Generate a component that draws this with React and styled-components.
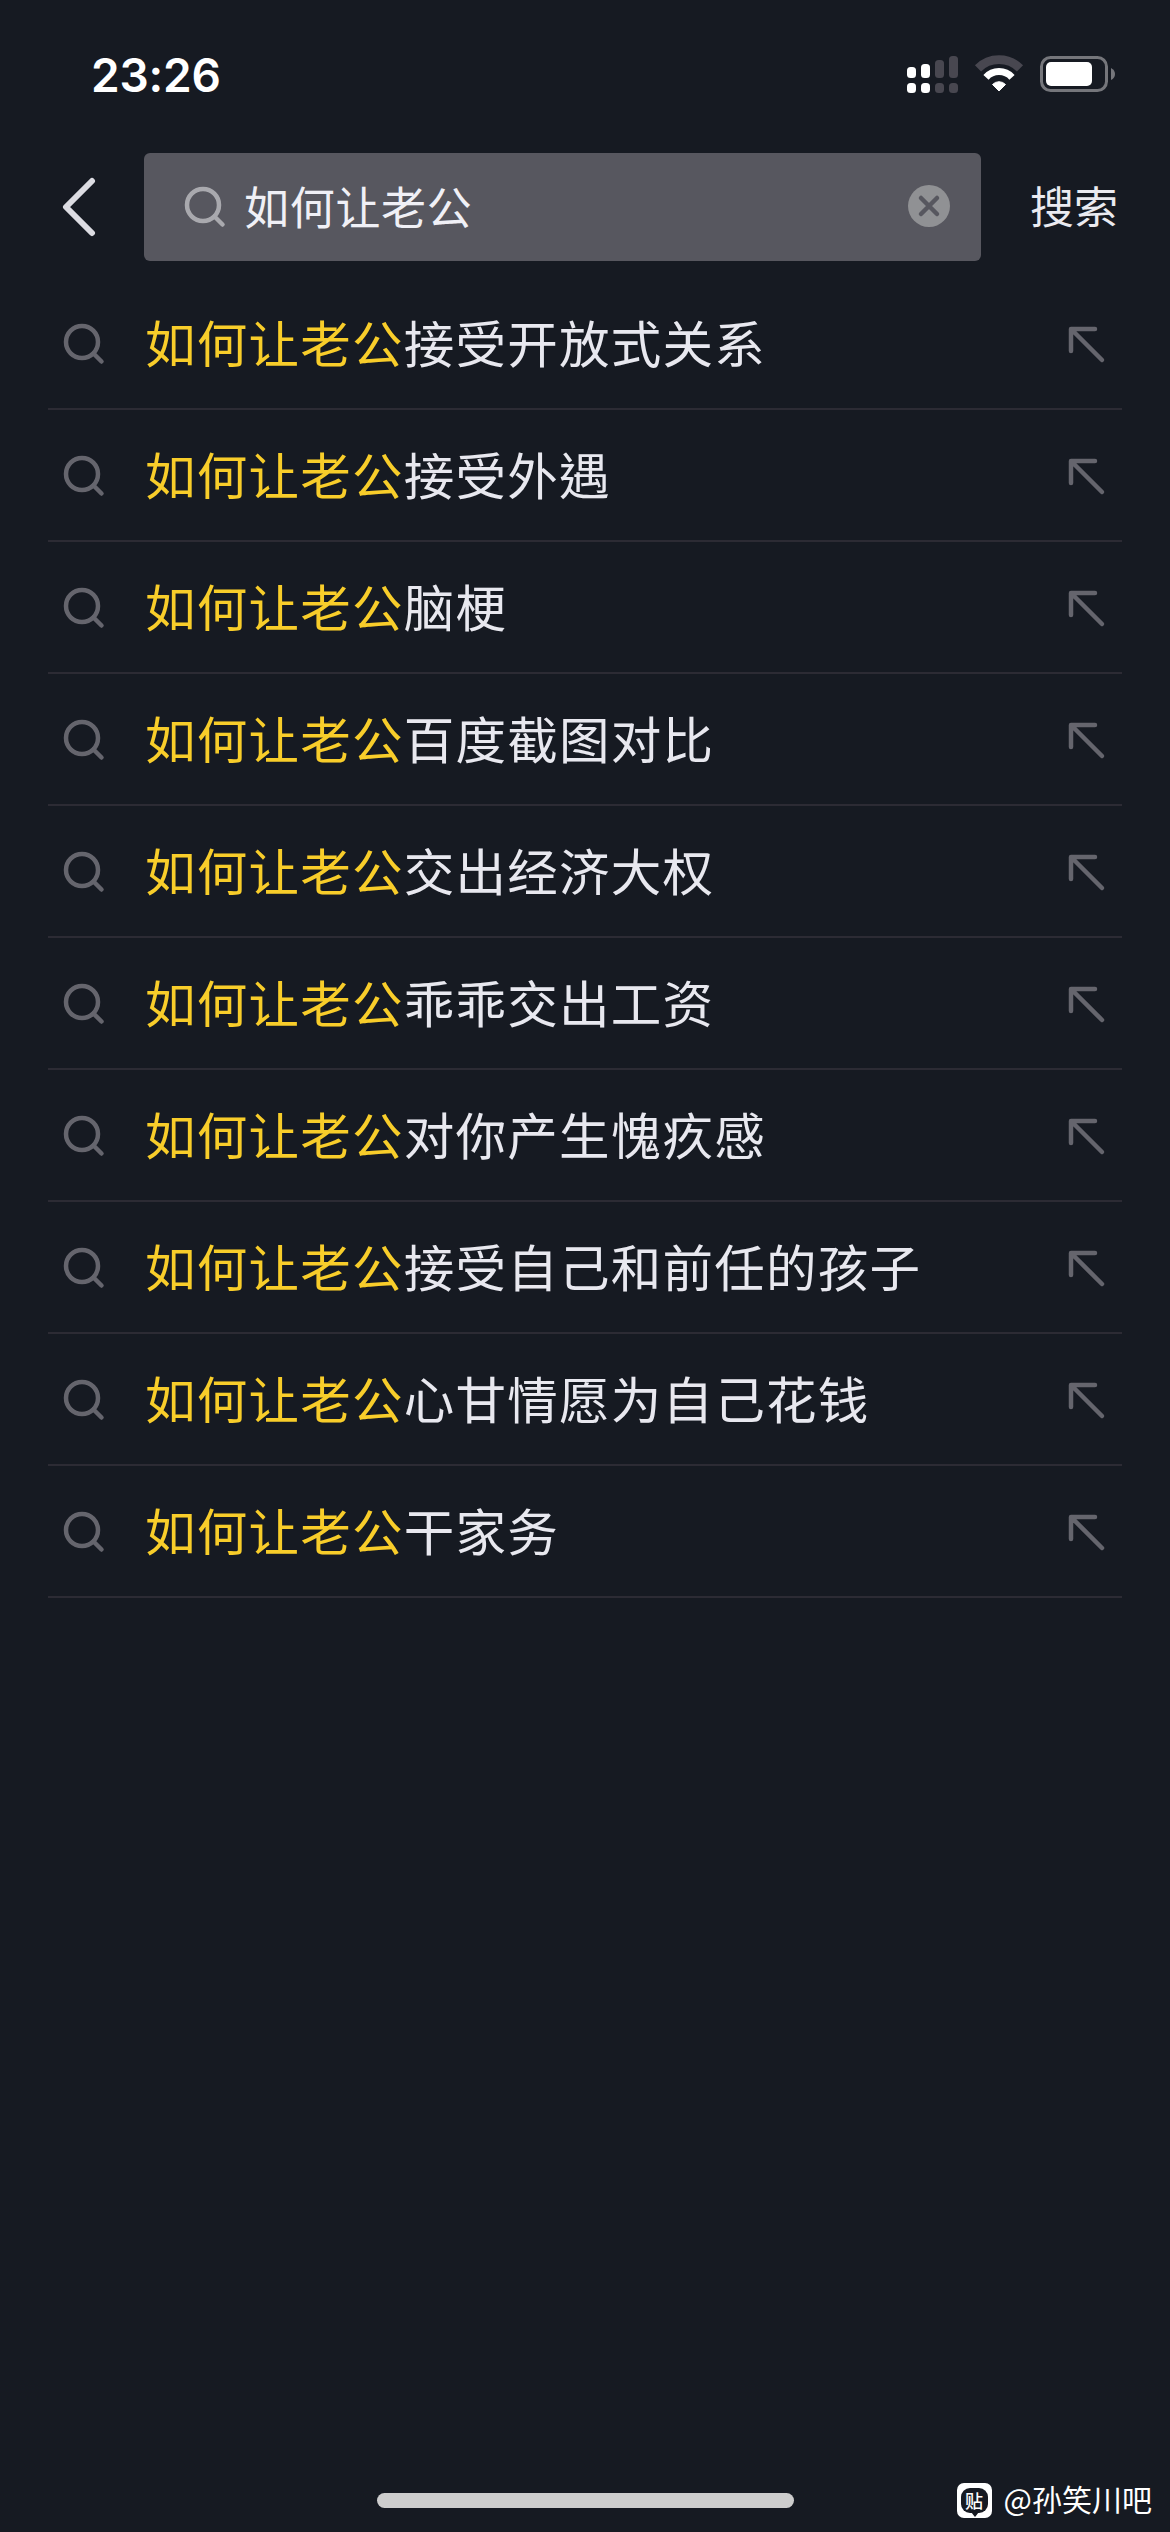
import React from "react";
import styled, { createGlobalStyle } from "styled-components";

const Global = createGlobalStyle`
  body { margin: 0; background: #161a22; }
  * { box-sizing: border-box; }
`;
const Screen = styled.main`
  width: 1170px;
  height: 2532px;
  display: flex;
  flex-direction: column;
  background: #161a22;
  color: #e8e8ef;
  font-family: "Noto Sans CJK SC", sans-serif;
  overflow: hidden;
`;
const StatusBar = styled.header`
  height: 153px;
  padding: 55px 54px 0 91px;
  display: flex;
  justify-content: space-between;
  align-items: flex-start;
`;
const Clock = styled.time`
  font: 600 46px/40px Inter, sans-serif;
  letter-spacing: -0.2px;
  color: #fff;
`;
const StatusIcons = styled.svg`
  width: 209px;
  height: 40px;
  display: block;
`;
const SearchBar = styled.div`
  display: flex;
  align-items: center;
  height: 108px;
  padding-left: 62px;
`;
const BackButton = styled.button`
  width: 82px;
  height: 60px;
  padding: 0;
  border: 0;
  background: none;
`;
const Icon = styled.svg`
  display: block;
  flex: none;
  width: ${(p) => p.$w}px;
  height: ${(p) => p.$h}px;
  margin-top: ${(p) => p.$top || 0}px;
  fill: none;
  stroke: ${(p) => p.$color};
  stroke-width: ${(p) => p.$stroke || 4.5};
  stroke-linecap: round;
  stroke-linejoin: round;
`;
const Field = styled.div`
  width: 837px;
  height: 108px;
  padding: 0 31px 0 40px;
  display: flex;
  align-items: center;
  background: #57575f;
  border-radius: 6px;
`;
const Query = styled.span`
  flex: 1;
  padding-left: 18px;
  font-size: 45px;
  line-height: 105px;
  height: 108px;
  letter-spacing: 0.7px;
  color: #f0f0f6;
`;
const SearchButton = styled.button`
  margin-left: 49px;
  padding: 0;
  border: 0;
  height: 108px;
  background: none;
  color: #eaeaf0;
  font: 400 44px/105px "Noto Sans CJK SC", sans-serif;
  display: flex;
  align-items: flex-start;
`;
const List = styled.ul`
  list-style: none;
  margin: 17px 48px 0;
  padding: 0;
  flex: 1;
`;
const Row = styled.li`
  height: 132px;
  padding: 0 16px 0 15px;
  display: flex;
  align-items: center;
  border-bottom: 2px solid #2c2b34;
`;
const Suggestion = styled.span`
  flex: 1;
  height: 130px;
  padding-left: 40px;
  font-size: 50.5px;
  line-height: 127px;
  letter-spacing: 1.25px;
  white-space: nowrap;
`;
const Match = styled.span`
  color: #f8cd2a;
`;
const Traditional = styled.span`
  font-family: "Noto Sans CJK TC", sans-serif;
`;
const Footer = styled.footer`
  height: 70px;
  display: grid;
  grid-template-columns: 1fr 417px 1fr;
  align-items: start;
`;
const HomeIndicator = styled.div`
  grid-column: 2;
  margin-top: 31px;
  height: 15px;
  border-radius: 8px;
  background: #cdcdcd;
`;
const Watermark = styled.div`
  display: flex;
  align-items: center;
  justify-content: flex-end;
  gap: 12px;
  height: 36px;
  margin: 20px 18px 0 0;
  color: #fff;
  font-size: 30px;
`;
const Account = styled.span`
  height: 36px;
  line-height: 32px;
`;
const Badge = styled.span`
  display: grid;
  place-items: center;
  width: 35px;
  height: 35px;
  border-radius: 7px;
  background: #fff;
`;
const BadgeBubble = styled.span`
  position: relative;
  display: grid;
  place-items: center;
  width: 27px;
  height: 25px;
  border-radius: 9px;
  background: #161a22;
  font-size: 18px;
  font-weight: 500;
  line-height: 25px;
  &::after {
    content: "";
    position: absolute;
    left: 10px;
    bottom: -4px;
    border: solid transparent;
    border-width: 5px 4px 0;
    border-top-color: #161a22;
  }
`;

const PREFIX = "如何让老公";
const SUGGESTIONS = [
  { text: "接受开放式关系" },
  { text: "接受外", traditional: "遇" },
  { text: "脑梗" },
  { text: "百度截图对比" },
  { text: "交出经济大权" },
  { text: "乖乖交出工资" },
  { text: "对你产生愧疚感" },
  { text: "接受自己和前任的孩子" },
  { text: "心甘情愿为自己花钱" },
  { text: "干家务" },
];

const Magnifier = ({ color, top }) => (
  <Icon $w={42} $h={42} $top={top} viewBox="0 0 42 42" $color={color}>
    <circle cx="19" cy="19" r="16" />
    <path d="M30.5 30.5L38.5 38.5" />
  </Icon>
);
const FillArrow = () => (
  <Icon $w={38} $h={38} $top={4} viewBox="0 0 38 38" $color="#65656d">
    <path d="M27 3H3V25M3.5 3.5L34 34" />
  </Icon>
);

export default function App() {
  return (
    <Screen>
      <Global />
      <StatusBar>
        <Clock>23:26</Clock>
        <StatusIcons viewBox="907 55 209 40">
          <g fill="#fff">
            <rect x="907" y="67" width="9" height="11" rx="3.5" />
            <rect x="921" y="64" width="9" height="14" rx="3.5" />
            <rect x="907" y="83" width="9" height="10" rx="3.5" />
            <rect x="921" y="83" width="9" height="10" rx="3.5" />
          </g>
          <g fill="#484750">
            <rect x="935" y="60" width="9" height="18" rx="3.5" />
            <rect x="949" y="56" width="9" height="22" rx="3.5" />
            <rect x="935" y="83" width="9" height="10" rx="3.5" />
            <rect x="949" y="83" width="9" height="10" rx="3.5" />
          </g>
          <path d="M978 68.3A29.7 29.7 0 0 1 1020 68.3" fill="none" stroke="#484750" strokeWidth="8.7" />
          <path d="M986 77.4A17.5 17.5 0 0 1 1012 77.4" fill="none" stroke="#fff" strokeWidth="7" />
          <path d="M999 91L992.5 84.5A9 9 0 0 1 1005.5 84.5Z" fill="#fff" stroke="#fff" strokeLinejoin="round" />
          <rect x="1041.5" y="57.5" width="65" height="33" rx="9" fill="none" stroke="#75767b" strokeWidth="3" />
          <rect x="1046" y="62" width="46" height="24" rx="5" fill="#fff" />
          <path d="M1111 68Q1115 70 1115 74T1111 80Z" fill="#75767b" />
        </StatusIcons>
      </StatusBar>
      <SearchBar>
        <BackButton aria-label="返回">
          <Icon $w={36} $h={60} viewBox="0 0 36 60" $color="#dcdce2" $stroke={6}>
            <path d="M30 4L4 30L30 56" />
          </Icon>
        </BackButton>
        <Field>
          <Magnifier color="#a9a9ae" />
          <Query>{PREFIX}</Query>
          <Icon $w={42} $h={42} $top={-2} viewBox="0 0 42 42" $color="#57575f">
            <circle cx="21" cy="21" r="21" fill="#909194" stroke="none" />
            <path d="M13 13L29 29M29 13L13 29" />
          </Icon>
        </Field>
        <SearchButton>搜索</SearchButton>
      </SearchBar>
      <List>
        {SUGGESTIONS.map(({ text, traditional }) => (
          <Row key={text}>
            <Magnifier color="#65656d" top={2} />
            <Suggestion>
              <Match>{PREFIX}</Match>
              {text}
              {traditional && <Traditional lang="zh-Hant">{traditional}</Traditional>}
            </Suggestion>
            <FillArrow />
          </Row>
        ))}
      </List>
      <Footer>
        <HomeIndicator />
        <Watermark>
          <Badge>
            <BadgeBubble>贴</BadgeBubble>
          </Badge>
          <Account>@孙笑川吧</Account>
        </Watermark>
      </Footer>
    </Screen>
  );
}
